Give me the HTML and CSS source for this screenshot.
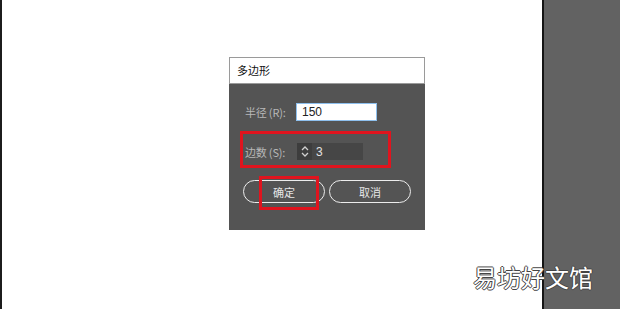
FILE: index.html
```html
<!DOCTYPE html>
<html lang="zh-CN">
<head>
    <meta charset="UTF-8">
    <title>多边形</title>
    <link rel="stylesheet" href="styles.css">
</head>
<body>

<div class="page">
    <div class="canvas">
        <div class="dialog">
            <div class="dialog-title">多边形</div>
            <div class="dialog-body">
                <div class="field-row radius">
                    <label>半径 (R):</label>
                    <input type="text" class="text-input" value="150">
                </div>

                <div class="field-row sides highlight">
                    <label>边数 (S):</label>
                    <span class="spinner">
                        <svg width="10" height="15" viewBox="0 0 10 15">
                            <path d="M2 6 L5 3 L8 6" fill="none" stroke="#d0d0d0" stroke-width="1.3"/>
                            <path d="M2 9 L5 12 L8 9" fill="none" stroke="#d0d0d0" stroke-width="1.3"/>
                        </svg>
                    </span>
                    <input type="text" class="text-input dark" value="3">
                </div>

                <div class="buttons">
                    <button class="btn ok">确定<span class="mark"></span></button>
                    <button class="btn">取消</button>
                </div>
            </div>
        </div>
    </div>
    <div class="side"></div>
    <div class="watermark">易坊好文馆</div>
</div>

</body>
</html>
```

FILE: styles.css
```css
body {
    margin: 0;
    padding: 0;
    background-color: #ffffff;
    font-family: "Noto Sans CJK SC", "Noto Sans", sans-serif;
}
.page {
    position: relative;
    display: flex;
    width: 620px;
    height: 309px;
    overflow: hidden;
}
.canvas {
    width: 540px;
    border-left: 2px solid #1c1c1c;
    background-color: #ffffff;
}
.side {
    flex: 1;
    border-left: 2px solid #151515;
    background-color: #626262;
}
.dialog {
    width: 196px;
    margin: 57px 0 0 227px;
    background-color: #545454;
}
.dialog-title {
    box-sizing: border-box;
    height: 27px;
    border: 1px solid #9a9a9a;
    background-color: #ffffff;
    padding-left: 7px;
    font-size: 11px;
    line-height: 25px;
    color: #111;
}
.dialog-body {
    padding: 19px 0 27px 11px;
}
.field-row {
    display: flex;
    align-items: center;
}
.field-row label {
    width: 51px;
    font-size: 11px;
    color: #b8b8b8;
    white-space: nowrap;
    letter-spacing: -0.2px;
}
.radius {
    height: 18px;
    padding-left: 5px;
}
.text-input {
    box-sizing: border-box;
    width: 81px;
    height: 18px;
    margin: 0;
    padding: 0 0 0 5px;
    border: 1px solid #8ec0ee;
    background-color: #ffffff;
    font-family: "Liberation Sans", Arial, sans-serif;
    font-size: 12px;
    color: #222;
    outline: none;
}
.highlight {
    box-sizing: border-box;
    width: 151px;
    height: 37px;
    margin-top: 10px;
    border: 3px solid #e0141e;
    padding: 6px 0 2px 2px;
}
.spinner {
    box-sizing: border-box;
    width: 15px;
    height: 17px;
    margin-left: 1px;
    background-color: #3d3d3d;
    display: flex;
    align-items: center;
    justify-content: center;
}
.text-input.dark {
    width: 51px;
    height: 17px;
    border: none;
    background-color: #464646;
    color: #e2e2e2;
    padding-left: 4px;
}
.buttons {
    display: flex;
    gap: 4px;
    margin: 12px 0 0 3px;
}
.btn {
    position: relative;
    box-sizing: border-box;
    width: 82px;
    height: 23px;
    padding: 0;
    border: 1.5px solid #ececec;
    border-radius: 12px;
    background-color: transparent;
    font-family: "Noto Sans CJK SC", sans-serif;
    font-size: 11px;
    color: #e6e6e6;
}
.mark {
    position: absolute;
    left: 15px;
    top: -5px;
    width: 60px;
    height: 34px;
    box-sizing: border-box;
    border: 3px solid #e0141e;
}
.watermark {
    position: absolute;
    right: 27px;
    top: 259px;
    font-size: 24px;
    color: #ffffff;
    letter-spacing: 0;
    text-shadow: -1px 0 #444, 1px 0 #444, 0 -1px #444, 0 1px #444;
}
```
